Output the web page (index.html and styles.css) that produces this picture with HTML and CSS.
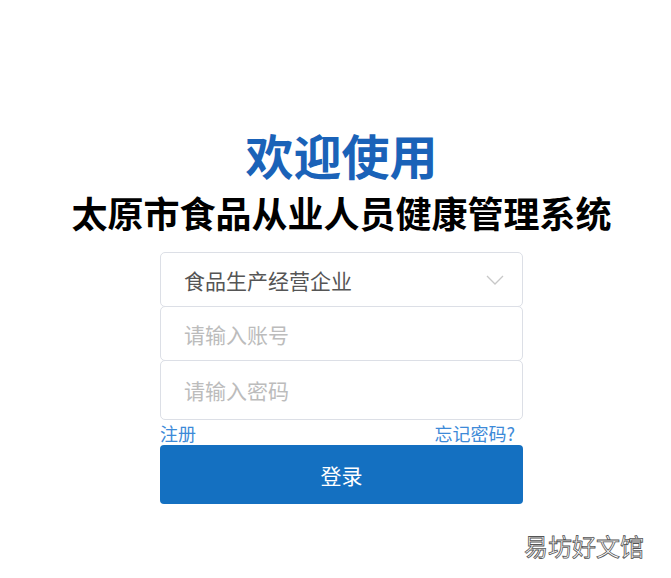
FILE: index.html
```html
<!DOCTYPE html>
<html lang="zh">
<head>
<meta charset="utf-8">
<link rel="stylesheet" href="styles.css">
</head>
<body>
<div class="page">
  <h1 class="welcome">欢迎使用</h1>
  <h2 class="system">太原市食品从业人员健康管理系统</h2>
  <form class="form">
    <div class="field select">
      <span class="value">食品生产经营企业</span>
      <svg class="chev" width="18" height="10" viewBox="0 0 18 10"><path d="M1 1 L9 9 L17 1" fill="none" stroke="#c8c8c8" stroke-width="1.3"/></svg>
    </div>
    <div class="field"><span class="ph">请输入账号</span></div>
    <div class="field tall"><span class="ph">请输入密码</span></div>
    <div class="links">
      <a class="link">注册</a>
      <a class="link">忘记密码?</a>
    </div>
    <div class="btn">登录</div>
  </form>
  <div class="mark">易坊好文馆</div>
</div>
</body>
</html>
```
FILE: styles.css
```css
* { box-sizing: border-box; }
body { margin: 0; background: #fff; font-family: "Noto Sans CJK SC", "Noto Sans", sans-serif; }
.page { width: 671px; height: 578px; position: relative; padding-top: 122px; padding-left: 12px; display: flex; flex-direction: column; align-items: center; }
.welcome { margin: 0; font-size: 48px; line-height: 64px; font-weight: 700; color: #1a62b8; }
.system { margin: 0; font-size: 36px; line-height: 50px; font-weight: 700; color: #000; margin-top: 1px; }
.form { width: 363px; display: flex; flex-direction: column; margin-top: 15px; }
.field { height: 55px; border: 1px solid #dcdfe6; border-radius: 5px; display: flex; align-items: center; padding: 0 18px 0 23px; margin-top: -1px; background: #fff; }
.field:first-child { margin-top: 0; }
.field.tall { height: 60px; }
.select { justify-content: space-between; }
.value { font-size: 21px; color: #555; }
.ph { font-size: 21px; color: #bcbcbc; }
.links { display: flex; justify-content: space-between; padding-right: 8px; height: 25px; align-items: center; }
.link { font-size: 18px; color: #3d8ad8; }
.btn { height: 59px; background: #1470c1; border-radius: 4px; color: #fff; font-size: 21px; display: flex; align-items: center; justify-content: center; }
.mark { position: absolute; right: 27px; top: 528px; font-size: 24px; color: #fff; -webkit-text-stroke: 0.8px #555; }
```
